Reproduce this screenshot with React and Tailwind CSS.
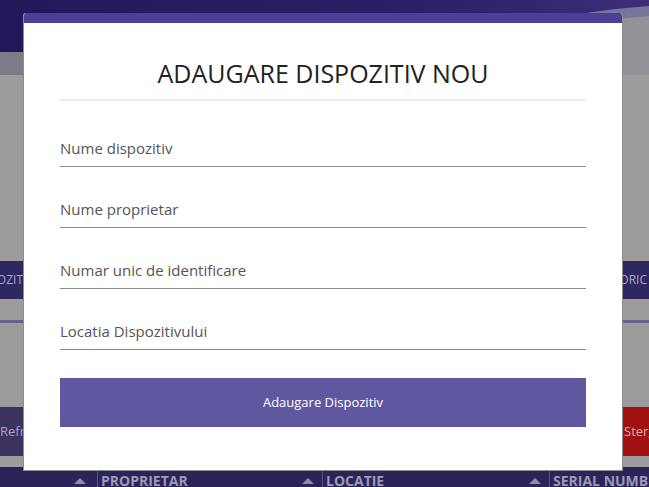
import React from "react";

const fields = [
  "Nume dispozitiv",
  "Nume proprietar",
  "Numar unic de identificare",
  "Locatia Dispozitivului",
];

const Caret = () => (
  <svg width="12" height="7" viewBox="0 0 12 7" className="shrink-0">
    <path d="M0 7 L6 1 L12 7 Z" fill="#8f8ca8" />
  </svg>
);

const Backdrop = () => (
  <div className="flex h-full w-full flex-col bg-[#9c9c9c]">
    <svg width="649" height="75" viewBox="0 0 649 75" className="block shrink-0">
      <defs>
        <linearGradient id="hdr" x1="0" y1="0" x2="1" y2="0">
          <stop offset="0" stopColor="#21185a" />
          <stop offset="0.6" stopColor="#2a1f66" />
          <stop offset="1" stopColor="#3a2f78" />
        </linearGradient>
      </defs>
      <rect width="649" height="75" fill="#949299" />
      <rect y="52" width="460" height="23" fill="#7f7c8a" />
      <path d="M0 0 H649 V16 C580 22 520 34 470 52 H0 Z" fill="#78759a" />
      <path d="M0 0 H649 V6 C570 12 510 26 455 52 H0 Z" fill="url(#hdr)" />
    </svg>
    <div className="h-[186px] shrink-0" />
    <div className="flex h-[38px] shrink-0 items-center justify-between overflow-hidden whitespace-nowrap bg-[#2d2960] font-['Open_Sans',sans-serif] text-[12px] text-[#aaa6c6]">
      <span className="-ml-[29px]">DISPOZITIVE</span>
      <span className="pr-[2px]">ISTORIC</span>
    </div>
    <div className="h-[21px] shrink-0" />
    <div className="h-[3px] shrink-0 bg-[#676090]" />
    <div className="h-[84px] shrink-0" />
    <div className="flex h-[49px] shrink-0 items-center justify-between font-['Open_Sans',sans-serif] text-[13px]">
      <div className="-ml-[12px] flex h-full w-[110px] items-center bg-[#3a3360] pl-[12px] text-[#a9a4c4]">
        Refresh
      </div>
      <div className="flex h-full w-[27px] items-center overflow-hidden whitespace-nowrap bg-[#a01212] pl-[2px] text-[#d8b0b0]">
        Sterge
      </div>
    </div>
    <div className="h-[11px] shrink-0" />
    <div className="flex h-[26px] shrink-0 items-center overflow-hidden whitespace-nowrap bg-[#2c2459] font-['Open_Sans',sans-serif] text-[14px] font-bold text-[#9c9ab6]">
      <div className="flex h-full w-[97px] shrink-0 items-center justify-end pr-[11px]">
        <Caret />
      </div>
      <div className="flex h-full w-[225px] shrink-0 items-center justify-between border-l border-[#5a5480] pl-[3px] pr-[8px]">
        <span>PROPRIETAR</span>
        <Caret />
      </div>
      <div className="flex h-full w-[227px] shrink-0 items-center justify-between border-l border-[#5a5480] pl-[3px] pr-[8px]">
        <span>LOCATIE</span>
        <Caret />
      </div>
      <div className="flex h-full shrink-0 items-center border-l border-[#5a5480] pl-[3px]">
        <span>SERIAL NUMBER</span>
      </div>
    </div>
  </div>
);

export default function App() {
  return (
    <div className="relative h-[487px] w-[649px] overflow-hidden font-['Open_Sans',sans-serif]">
      <Backdrop />
      <div className="absolute left-[23px] top-[13px] flex h-[458px] w-[600px] flex-col overflow-hidden rounded-t-[3px] border border-t-0 border-[#8d8d8d] bg-white">
        <div className="h-[10px] shrink-0 bg-[#4b3f98]" />
        <div className="flex flex-col px-[36px]">
          <h2 className="pt-[34px] text-center text-[25px] leading-[32px] text-[#222222]">
            ADAUGARE DISPOZITIV NOU
          </h2>
          <div className="mt-[10px] h-[2px] bg-[#eeeeee]" />
          <div className="flex flex-col gap-[25px] pt-[30px]">
            {fields.map((f) => (
              <div
                key={f}
                className="flex h-[36px] items-center border-b border-[#8a8a8a] text-[15px] text-[#555555]"
              >
                {f}
              </div>
            ))}
          </div>
          <button className="mt-[28px] flex h-[49px] items-center justify-center bg-[#5f58a0] text-[13px] text-white">
            Adaugare Dispozitiv
          </button>
        </div>
      </div>
    </div>
  );
}
